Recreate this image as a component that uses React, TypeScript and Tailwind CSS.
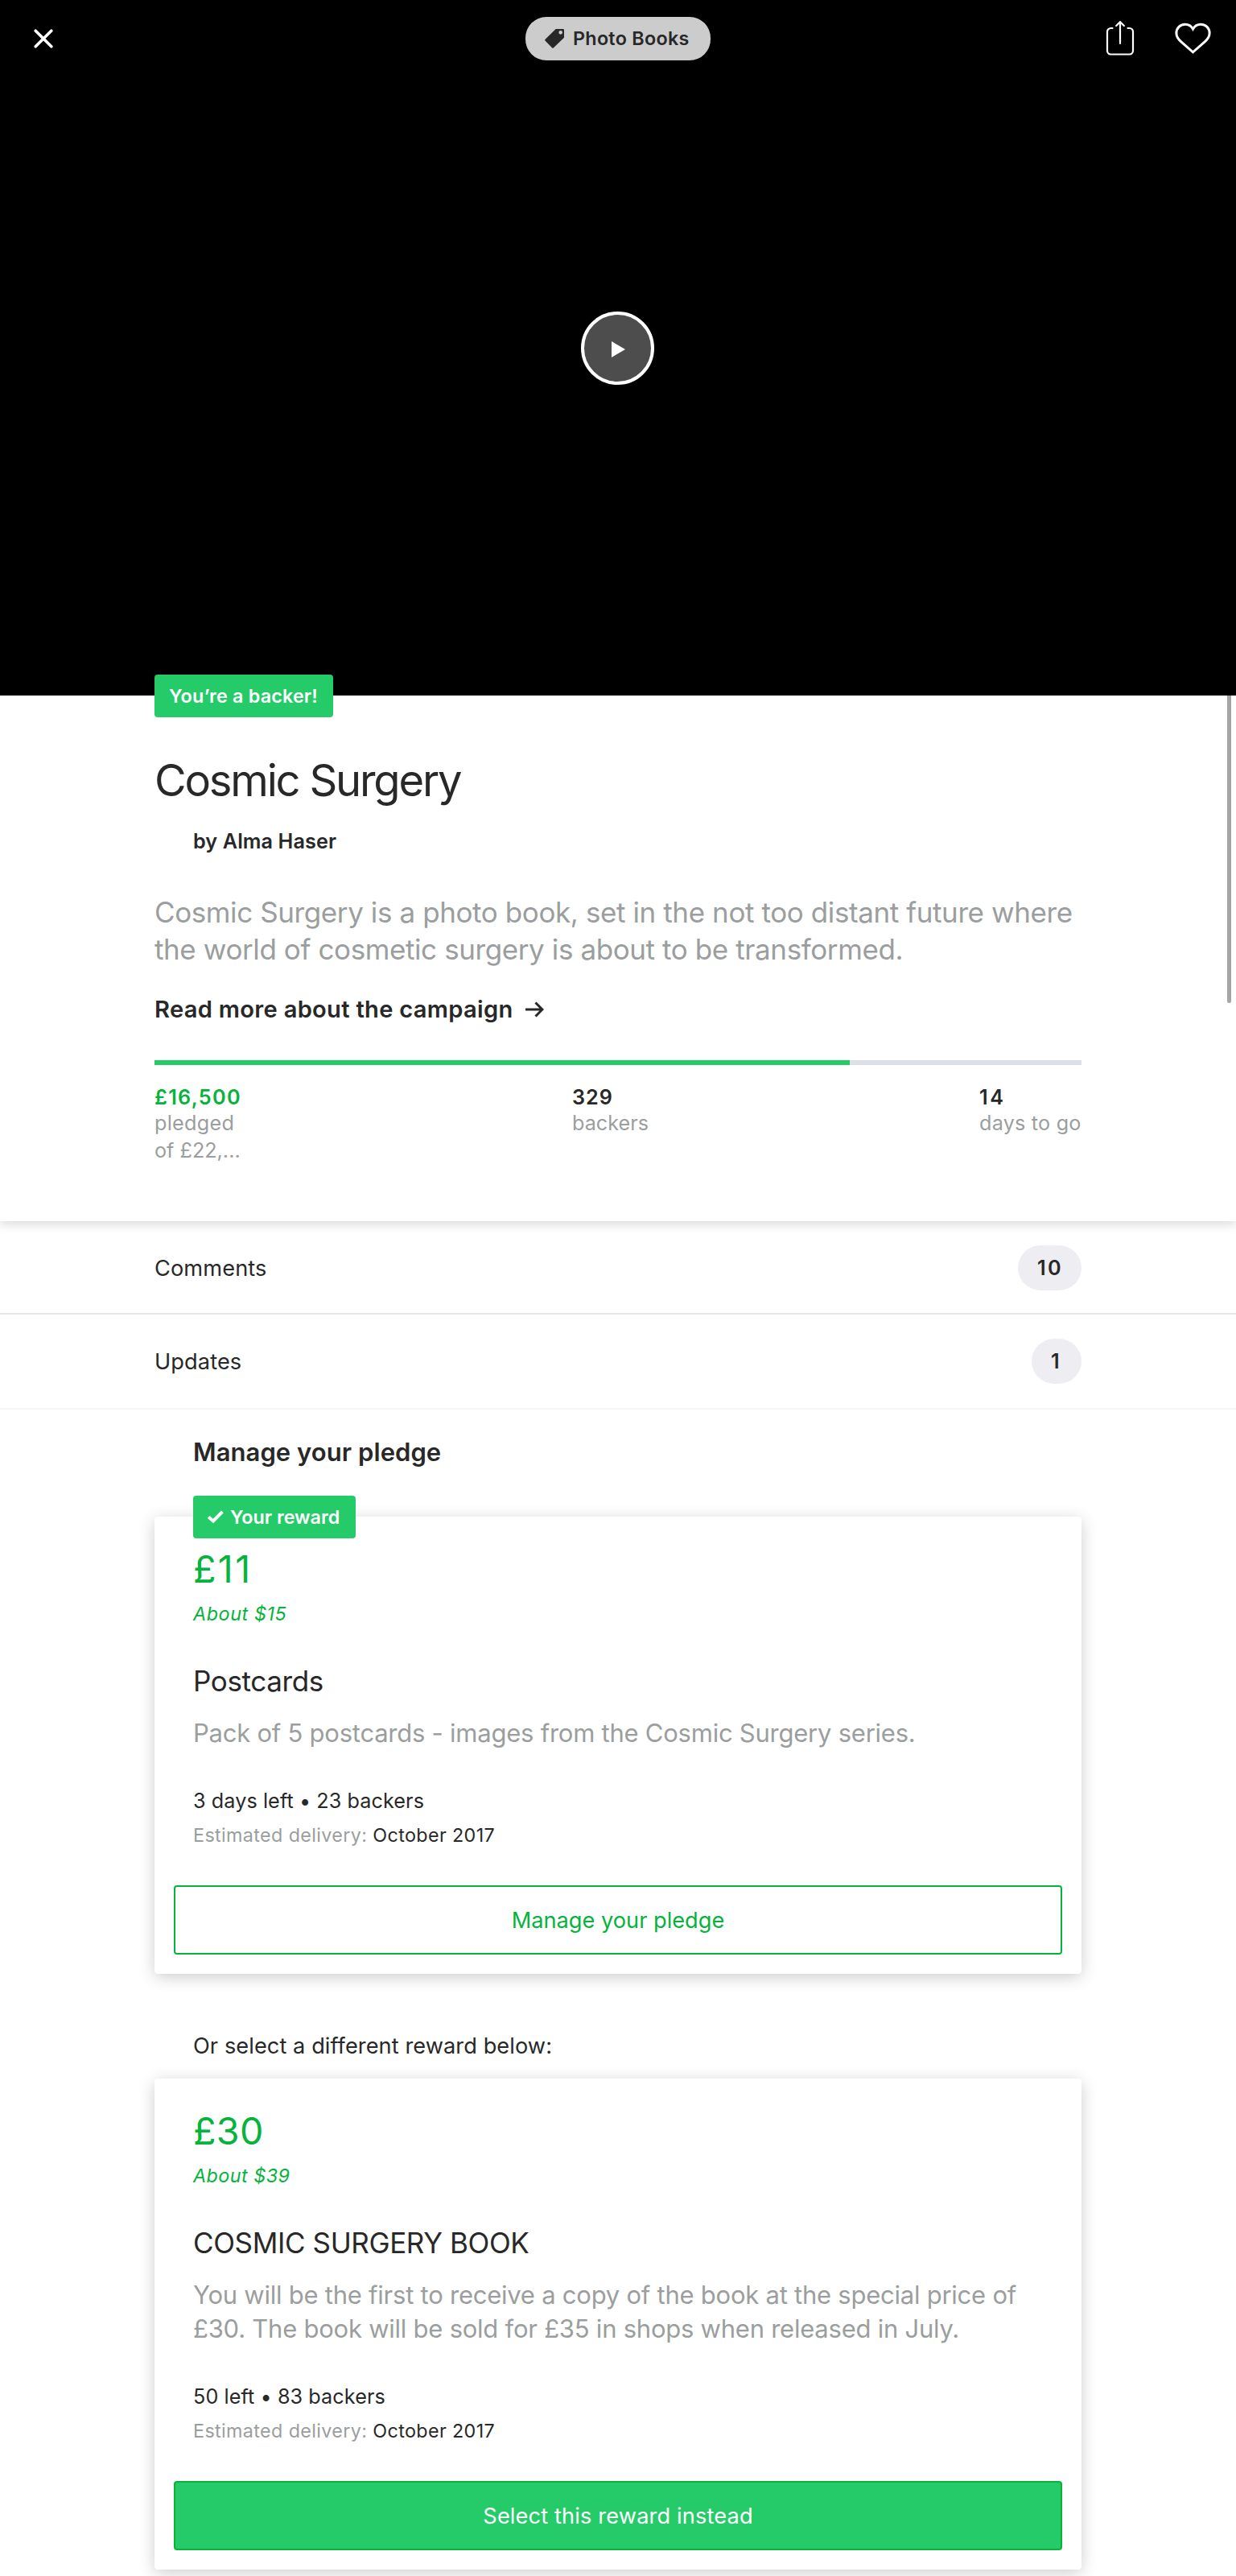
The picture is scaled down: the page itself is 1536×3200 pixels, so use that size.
import React from "react";

function CloseIcon() {
  return (
    <svg className="h-[24px] w-[24px]" viewBox="0 0 24 24" fill="none" stroke="#fff" strokeWidth="3.6" strokeLinecap="round">
      <path d="M2.2 2.2 21.8 21.8M21.8 2.2 2.2 21.8" />
    </svg>
  );
}

function TagIcon() {
  return (
    <svg className="h-[24px] w-[24px] shrink-0" viewBox="0 0 72 72" fill="#282828">
      <path
        fillRule="evenodd"
        d="M41 0H68q4 0 4 4V32L33 70q-3 3-6 0L2 44q-3-3 0-6ZM59 6a7 7 0 1 0 0 14a7 7 0 1 0 0-14Z"
      />
    </svg>
  );
}

function ShareIcon() {
  return (
    <svg className="h-[44px] w-[36px]" viewBox="0 0 36 44" fill="none" stroke="#fff" strokeWidth="2.2" strokeLinecap="round">
      <path d="M8.500 9H6.500a4.500 4.500 0 0 0-4.500 4.500V37a4.500 4.500 0 0 0 4.500 4.500H29.500a4.500 4.500 0 0 0 4.500-4.500V13.500a4.500 4.500 0 0 0-4.500-4.500H27.500" />
      <path d="M18 1.500V28M13.200 6 18 1.200 22.800 6" />
    </svg>
  );
}

function HeartIcon() {
  return (
    <svg className="h-[40px] w-[45px]" viewBox="0 0 45 40" fill="none" stroke="#fff" strokeWidth="3">
      <path d="M22.500 8C20.300 4.200 16.800 2.300 12.700 2.300C6.500 2.300 1.900 6.900 1.900 13.200C1.900 17.500 4 20.400 7.500 23.600L22.500 36.800L37.500 23.600C41 20.400 43.100 17.500 43.100 13.200C43.100 6.900 38.500 2.300 32.300 2.300C28.200 2.300 24.700 4.200 22.500 8Z" />
    </svg>
  );
}

function CheckIcon() {
  return (
    <svg className="mb-px h-[17px] w-[20px] shrink-0" viewBox="0 0 20 17" fill="none" stroke="#fff" strokeWidth="4">
      <path d="M1.300 8.400 7 13.500 18.400 1.800" />
    </svg>
  );
}

function ArrowIcon() {
  return (
    <svg className="h-[20px] w-[24px]" viewBox="0 0 24 20" fill="none" stroke="#282828" strokeWidth="3">
      <path d="M1 10H22M13.500 1.500 22 10 13.500 18.500" />
    </svg>
  );
}

function CountRow({ label, count, pill, last }: { label: string; count: string; pill: string; last?: boolean }) {
  return (
    <div className={last ? "border-b-2 border-[#f5f5f6] pt-[30px] pb-[30px]" : "border-b-2 border-[#e6e6e6] pt-[30px] pb-7"}>
      <div className="mx-auto flex h-14 w-[1152px] items-center justify-between">
        <span className="pt-0.5 text-[27.2px] leading-[54px] tracking-[0.1px]">{label}</span>
        <span className={pill}>{count}</span>
      </div>
    </div>
  );
}

interface RewardProps {
  amount: string;
  amountClass: string;
  about: string;
  aboutClass: string;
  title: string;
  description: React.ReactNode;
  stats: string;
  action: React.ReactNode;
  badge?: React.ReactNode;
}

function RewardCard({ amount, amountClass, about, aboutClass, title, description, stats, action, badge }: RewardProps) {
  return (
    <article className="relative mx-auto w-[1152px] rounded-[4px] bg-white px-12 pt-[37px] pb-6 shadow-[0_4px_20px_rgba(0,0,0,0.2)]">
      {badge}
      <div className={amountClass}>{amount}</div>
      <div className={aboutClass}>{about}</div>
      <h3 className="mt-12 text-[35px] leading-[42px] tracking-[-0.38px]">{title}</h3>
      <p className="mt-[23px] text-[31px] leading-[42px] tracking-[-0.24px] whitespace-nowrap text-[#9b9e9e]">{description}</p>
      <div className="mt-12 text-[25.2px] leading-[30px] tracking-[0.08px]">{stats}</div>
      <div className="mt-[13px] text-[23.3px] leading-[29px] tracking-[0.38px]">
        <span className="text-[#9b9e9e]">Estimated delivery:</span> October 2017
      </div>
      {action}
    </article>
  );
}

export default function App() {
  return (
    <main className="relative h-[3200px] w-[1536px] overflow-hidden bg-white font-['Inter',sans-serif] text-[#282828]">
      <section className="flex h-[864px] flex-col bg-black">
        <header className="grid h-24 shrink-0 grid-cols-3 items-center pr-[31px] pl-[42px]">
          <button className="flex items-center" aria-label="Close">
            <CloseIcon />
          </button>
          <div className="mr-[11px] flex w-[230px] items-center gap-[11px] justify-self-center rounded-[26px] bg-[#ccc] pl-6">
            <TagIcon />
            <span className="text-[23.3px] leading-[54px] font-semibold tracking-[0.3px] whitespace-nowrap">Photo Books</span>
          </div>
          <div className="flex items-center justify-end gap-[50px]">
            <ShareIcon />
            <HeartIcon />
          </div>
        </header>
        <div className="flex flex-1 items-center justify-center pr-px pb-[95px]">
          <button className="flex h-[91px] w-[91px] items-center justify-center rounded-full border-4 border-white bg-[#4d4d4d]" aria-label="Play">
            <svg className="mt-0.5 ml-0.5 h-[20px] w-[17px]" viewBox="0 0 17 20" fill="#fff">
              <path d="M0 0 17 10 0 20Z" />
            </svg>
          </button>
        </div>
      </section>

      <div className="absolute top-[864px] right-[6px] z-10 h-[382px] w-[5px] rounded-b-full bg-[#a5a5a5]" />

      <section className="relative flow-root bg-white pb-[72px] shadow-[0_4px_12px_rgba(0,0,0,0.15)]">
        <div className="mx-auto flow-root w-[1152px]">
          <div className="relative -mt-[26px] h-[53px] w-[222px] rounded-[4px] bg-[#25cb68] pl-[18px] text-[23.3px] leading-[53px] font-semibold tracking-[0.19px] whitespace-nowrap text-white">
            You’re a backer!
          </div>
          <h1 className="mt-[45px] text-[54.3px] leading-[66px] tracking-[-2.2px]">Cosmic Surgery</h1>
          <div className="mt-7 pl-12 text-[25.2px] leading-[30px] font-semibold tracking-[0.1px]">by Alma Haser</div>
          <p className="mt-[51px] h-[92px] text-[35px] leading-[45.5px] tracking-[-0.4px] whitespace-nowrap text-[#9b9e9e]">
            Cosmic Surgery is a photo book, set in the not too distant future where
            <br />
            the world of cosmetic surgery is about to be transformed.
          </p>
          <a className="mt-[33px] flex items-center gap-[14px] text-[29.1px] leading-[35px] font-semibold tracking-[0.3px]">
            Read more about the campaign
            <ArrowIcon />
          </a>
          <div className="mt-[46px] h-1.5 bg-[#dcdee8]">
            <div className="h-full w-3/4 bg-[#25cb68]" />
          </div>
          <div className="mt-6 flex justify-between text-[25.2px] leading-8 whitespace-nowrap text-[#9b9e9e]">
            <div className="w-[108px]">
              <div className="font-semibold tracking-[1.3px] text-[#05b33d]">£16,500</div>
              <div className="tracking-[0.29px]">pledged</div>
              <div className="mt-0.5">of £22,...</div>
            </div>
            <div className="w-[95px]">
              <div className="font-semibold tracking-[1px] text-[#282828]">329</div>
              <div>backers</div>
            </div>
            <div className="w-[127px]">
              <div className="font-semibold tracking-[2.6px] text-[#282828]">14</div>
              <div className="tracking-[0.22px]">days to go</div>
            </div>
          </div>
        </div>
      </section>

      <CountRow
        label="Comments"
        count="10"
        pill="h-14 w-[79px] rounded-full bg-[#eeedf2] pl-6 text-[25.2px] leading-[56px] font-semibold tracking-[2.3px]"
      />
      <CountRow
        label="Updates"
        count="1"
        pill="h-14 w-[62px] rounded-full bg-[#eeedf2] pl-6 text-[25.2px] leading-[56px] font-semibold"
        last
      />

      <section>
        <h2 className="mx-auto mt-[34px] mb-[62px] w-[1152px] pl-12 text-[31px] leading-[37px] font-semibold tracking-[0.06px]">
          Manage your pledge
        </h2>
        <RewardCard
          badge={
            <div className="absolute -top-[26px] left-12 flex h-[53px] w-[202px] items-center gap-[8px] rounded-[4px] bg-[#25cb68] pl-[18px] text-[23.3px] leading-[53px] font-semibold whitespace-nowrap text-white">
              <CheckIcon />
              Your reward
            </div>
          }
          amount="£11"
          amountClass="text-[46.6px] leading-[56px] tracking-[2.4px] text-[#05b33d]"
          about="About $15"
          aboutClass="mt-[13px] text-[23.3px] leading-[29px] tracking-[0.6px] text-[#05b33d] italic"
          title="Postcards"
          description="Pack of 5 postcards - images from the Cosmic Surgery series."
          stats="3 days left • 23 backers"
          action={
            <button className="-mx-6 mt-12 block h-[86px] w-[1104px] rounded-[4px] border-2 border-[#05b33d] pt-px text-[27.2px] leading-[81px] text-[#05b33d]">
              Manage your pledge
            </button>
          }
        />
        <p className="mx-auto mt-[73px] mb-6 w-[1152px] pl-12 text-[27.2px] leading-[33px] tracking-[0.07px]">
          Or select a different reward below:
        </p>
        <RewardCard
          amount="£30"
          amountClass="text-[46.6px] leading-[56px] tracking-[0.4px] text-[#05b33d]"
          about="About $39"
          aboutClass="mt-[13px] text-[23.3px] leading-[29px] tracking-[0.5px] text-[#05b33d] italic"
          title="COSMIC SURGERY BOOK"
          description={
            <>
              You will be the first to receive a copy of the book at the special price of
              <br />
              £30. The book will be sold for £35 in shops when released in July.
            </>
          }
          stats="50 left • 83 backers"
          action={
            <button className="-mx-6 mt-12 block h-[86px] w-[1104px] rounded-[4px] border-2 border-[#05b33d] bg-[#25cb68] pt-px text-[27.2px] leading-[81px] tracking-[0.14px] text-white">
              Select this reward instead
            </button>
          }
        />
      </section>
    </main>
  );
}
